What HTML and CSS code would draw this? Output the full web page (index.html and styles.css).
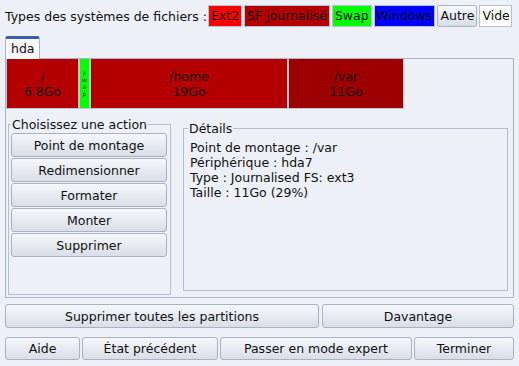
FILE: index.html
```html
<!DOCTYPE html>
<html lang="fr">
<head>
<meta charset="utf-8">
<link rel="stylesheet" href="styles.css">
</head>
<body>
<div class="legend-row">
  <span class="legend-label">Types des systèmes de fichiers :</span>
  <div class="legend-boxes">
    <span class="lbox ext2">Ext2</span>
    <span class="lbox journal">SF journalisé</span>
    <span class="lbox swap">Swap</span>
    <span class="lbox windows">Windows</span>
    <span class="lbox autre">Autre</span>
    <span class="lbox vide">Vide</span>
  </div>
</div>

<div class="notebook">
  <div class="tabs"><span class="tab">hda</span></div>
  <div class="page">
    <div class="bar">
      <div class="part journal-part p-root"><span>/<br>6.8Go</span></div>
      <div class="part swap-part p-swap"><span class="tiny">swap</span></div>
      <div class="part journal-part p-home"><span>/home<br>19Go</span></div>
      <div class="part selected p-var"><span>/var<br>11Go</span></div>
    </div>
    <div class="panels">
      <fieldset class="group actions">
        <legend>Choisissez une action</legend>
        <div class="action-list">
          <button class="btn">Point de montage</button>
          <button class="btn">Redimensionner</button>
          <button class="btn">Formater</button>
          <button class="btn">Monter</button>
          <button class="btn">Supprimer</button>
        </div>
      </fieldset>
      <fieldset class="group details">
        <legend>Détails</legend>
        <div class="details-text">
          <div>Point de montage : /var</div>
          <div>Périphérique : hda7</div>
          <div>Type : Journalised FS: ext3</div>
          <div>Taille : 11Go (29%)</div>
        </div>
      </fieldset>
    </div>
  </div>
</div>

<div class="row row-one">
  <button class="btn">Supprimer toutes les partitions</button>
  <button class="btn">Davantage</button>
</div>
<div class="row row-two">
  <button class="btn">Aide</button>
  <button class="btn">État précédent</button>
  <button class="btn">Passer en mode expert</button>
  <button class="btn">Terminer</button>
</div>
</body>
</html>
```

FILE: styles.css
```css
html, body {
  margin: 0;
  padding: 0;
}
body {
  width: 519px;
  height: 366px;
  background: #edf0f6;
  font-family: "DejaVu Sans", sans-serif;
  font-size: 12.5px;
  color: #111;
  overflow: hidden;
}

.legend-row {
  display: flex;
  align-items: center;
  padding: 5px 0 0 5px;
  height: 22px;
}
.legend-label {
  margin-right: 1px;
  white-space: nowrap;
}
.legend-boxes {
  display: flex;
  gap: 2px;
}
.lbox {
  box-sizing: border-box;
  height: 22px;
  line-height: 20px;
  padding: 0 2px;
  border: 1px solid #b7c3d3;
  white-space: nowrap;
}
.ext2 { background: #ff0000; }
.journal { background: #b40000; }
.swap { background: #00ff00; }
.windows { background: #0000ff; }
.autre {
  background: linear-gradient(#f6f8fb, #d8dee7);
  border-color: #aab5c4;
  border-radius: 2px;
}
.vide { background: #ffffff; padding: 0 1px 0 2px; }

.notebook {
  margin: 8px 5px 0 5px;
}
.tabs {
  display: flex;
  height: 23px;
  align-items: flex-end;
}
.tab {
  box-sizing: border-box;
  width: 35px;
  height: 23px;
  padding: 2px 0 0 5px;
  background: #f6f8fb;
  border: 1px solid #a9b6c7;
  border-top: 3px solid #3f5ca8;
  border-bottom: none;
  border-radius: 3px 3px 0 0;
  margin-bottom: -1px;
  position: relative;
  z-index: 1;
  line-height: 16px;
}
.page {
  box-sizing: border-box;
  height: 240px;
  border: 1px solid #a9b6c7;
  display: flex;
  flex-direction: column;
}

.bar {
  display: flex;
  height: 50px;
  flex: none;
}
.part {
  box-sizing: border-box;
  height: 50px;
  border: 1px solid #bac6d5;
  border-top: none;
  display: flex;
  align-items: center;
  justify-content: center;
  text-align: center;
  line-height: 15px;
  overflow: hidden;
}
.journal-part { background: #b40000; }
.selected { background: #9c0000; }
.swap-part { background: #00ff00; }
.p-root { width: 73px; }
.p-swap { width: 11px; align-items: flex-start; }
.p-home { width: 198px; }
.p-var { width: 116px; }
.tiny {
  display: block;
  width: 5px;
  font-size: 6px;
  line-height: 7px;
  word-break: break-all;
  padding-top: 10px;
}

.panels {
  flex: 1;
  display: flex;
  align-items: flex-end;
  gap: 12px;
  padding: 0 5px 2px 2px;
}
.group {
  margin: 0;
  border: 1px solid #b4c0cf;
  min-width: 0;
}
.group legend {
  padding: 0 1px;
  line-height: 15px;
}
.actions {
  width: 163px;
  flex: none;
  box-sizing: border-box;
  padding: 1px 3px 0 2px;
}
.action-list {
  height: 161px;
  display: flex;
  flex-direction: column;
  gap: 1px;
}
.details {
  flex: 1;
  box-sizing: border-box;
  margin-bottom: 4px;
  padding: 4px 4px 0 4px;
}
.details-text {
  height: 150px;
  padding-left: 2px;
  line-height: 15px;
}

.btn {
  box-sizing: border-box;
  height: 24px;
  flex: none;
  margin: 0;
  padding: 0;
  font-family: "DejaVu Sans", sans-serif;
  font-size: 12.5px;
  color: #111;
  background: linear-gradient(#f5f7fa, #d9dee7);
  border: 1px solid #a8b3c2;
  border-radius: 3px;
  white-space: nowrap;
}

.row {
  display: grid;
  margin: 0 5px 0 5px;
}
.row-one {
  margin-top: 6px;
  grid-template-columns: 314px 1fr;
  gap: 3px;
}
.row-two {
  margin-top: 9px;
  grid-template-columns: 75px 136px 192px 1fr;
  gap: 2px;
}
.row-two .btn { height: 23px; }
```
